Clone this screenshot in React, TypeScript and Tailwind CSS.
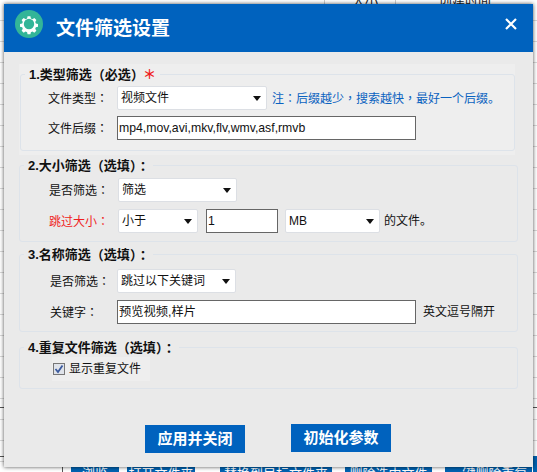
import React from "react";

function Caret() {
  return (
    <svg width="8" height="5" viewBox="0 0 8 5" className="shrink-0">
      <path d="M0 0H8L4 5Z" fill="#111" />
    </svg>
  );
}

function P({ children }: { children: React.ReactNode }) {
  return <span className="font-['Noto_Sans_CJK_TC',sans-serif]">{children}</span>;
}

function Select({ value, w }: { value: string; w: string }) {
  return (
    <div className={`flex h-[24px] ${w} shrink-0 items-center justify-between rounded-[2px] border border-[#dcdfe4] bg-white pl-[3px] pr-[5px] text-[12px] text-[#111]`}>
      <span>{value}</span>
      <Caret />
    </div>
  );
}

function Input({ value, w }: { value: string; w: string }) {
  return (
    <div className={`flex h-[24px] ${w} shrink-0 items-center border border-[#666] bg-white pl-[1px] text-[12.25px] leading-none text-[#111]`}>
      {value}
    </div>
  );
}

function Group({ title, extra, children, className }: { title: React.ReactNode; extra?: React.ReactNode; children: React.ReactNode; className: string }) {
  return (
    <fieldset className={`min-w-0 rounded-[3px] border border-[#dde3ea] ${className}`}>
      <legend className="ml-[4px] flex h-[16px] items-center px-[4px] text-[13px] font-bold leading-none text-[#111]">
        {title}
        {extra}
      </legend>
      {children}
    </fieldset>
  );
}

function Label({ children, red }: { children: React.ReactNode; red?: boolean }) {
  return <span className={`w-[69px] shrink-0 text-[12px] ${red ? "text-[#f01f1f]" : "text-[#111]"}`}>{children}</span>;
}

export default function App() {
  return (
    <div className="relative h-[472px] w-[537px] overflow-hidden bg-white bg-[repeating-linear-gradient(to_bottom,#ffffff_0,#ffffff_20px,#d8d8d8_20px,#d8d8d8_21px)] font-['Liberation_Sans','Noto_Sans_CJK_SC',sans-serif]">
      {/* application behind the dialog */}
      <div className="absolute left-[352px] top-[-9px] text-[13px] text-[#222]">大小</div>
      <div className="absolute left-[439px] top-[-9px] text-[13px] text-[#222]">创建时间</div>
      <div className="absolute left-[324px] top-0 h-[4px] w-px bg-[#ccc]" />
      <div className="absolute left-[395px] top-0 h-[4px] w-px bg-[#ccc]" />
      <div className="absolute left-0 top-[407px] h-px w-full bg-[#555]" />
      <div className="absolute left-0 top-[456px] h-px w-full bg-[#555]" />
      <div className="absolute left-[62px] top-[467px] h-[5px] w-px bg-[#555]" />
      <div className="absolute left-[533px] top-[456px] h-[16px] w-[4px] bg-[#0062b1]" />
      <div className="absolute left-[71px] top-[467px] flex text-[13px] text-white">
        <div className="mr-[8px] h-[20px] w-[48px] bg-[#0062b1] text-center leading-[14px]">浏览</div>
        <div className="mr-[25px] h-[20px] w-[68px] bg-[#0062b1] text-center leading-[14px]">打开文件夹</div>
        <div className="mr-[13px] h-[20px] w-[112px] bg-[#0062b1] text-center leading-[14px]">替换到目标文件夹</div>
        <div className="mr-[13px] h-[20px] w-[87px] bg-[#0062b1] text-center leading-[14px]">删除选中文件</div>
        <div className="h-[20px] w-[87px] bg-[#0062b1] text-center leading-[14px]">一键删除重复</div>
      </div>

      {/* dialog */}
      <div className="absolute left-[4px] top-[4px] h-[463px] w-[529px] bg-[#eaeaea] shadow-[0_0_4px_rgba(0,0,0,0.7)]">
        <div className="flex h-[48px] items-center bg-[#0062be] pl-[11px] pr-[16px]">
          <svg width="28" height="28" viewBox="0 0 28 28" className="mb-[8px] shrink-0">
            <circle cx="14" cy="14" r="14" fill="#33b598" />
            <path
              d="M12.4 5.5h3.2l.5 2.4 1.7.7 2.1-1.3 2.3 2.3-1.3 2.1.7 1.7 2.4.5v3.2l-2.4.5-.7 1.7 1.3 2.1-2.3 2.3-2.1-1.3-1.7.7-.5 2.4h-3.2l-.5-2.4-1.7-.7-2.1 1.3-2.3-2.3 1.3-2.1-.7-1.7-2.4-.5v-3.2l2.4-.5.7-1.7-1.3-2.1 2.3-2.3 2.1 1.3 1.7-.7z"
              fill="#fff"
              transform="translate(1.4 1.4) scale(0.9)"
            />
            <circle cx="14" cy="14" r="5.2" fill="#33b598" />
          </svg>
          <span className="ml-[13px] text-[19px] font-bold leading-none text-white">文件筛选设置</span>
          <svg width="12" height="12" viewBox="0 0 12 12" className="mb-[8px] ml-auto shrink-0">
            <path d="M1 1L11 11M11 1L1 11" stroke="#fff" strokeWidth="2.2" />
          </svg>
        </div>

        <div className="pl-[15px] pt-[12px]">
          <div className="h-[91px] w-[496px] bg-[#eeeeee] pt-[2px]">
            <Group
              title={<>1.类型筛选<P>（</P>必选<P>）</P></>}
              extra={<span className="ml-[-1px] text-[13px] font-bold leading-none text-[#f01f1f]">＊</span>}
              className="ml-[1px] h-[85px] w-[495px]"
            >
              <div className="flex flex-col gap-[6px] pl-[27px] pt-[4px]">
                <div className="flex items-center">
                  <Label>文件类型<P>：</P></Label>
                  <Select value="视频文件" w="w-[150px]" />
                  <span className="ml-[5px] whitespace-nowrap text-[12px] text-[#0a62c0]">注<P>：</P>后缀越少<P>，</P>搜索越快<P>，</P>最好一个后缀。</span>
                </div>
                <div className="flex items-center">
                  <Label>文件后缀<P>：</P></Label>
                  <Input value="mp4,mov,avi,mkv,flv,wmv,asf,rmvb" w="w-[299px]" />
                </div>
              </div>
            </Group>
          </div>

          <Group title={<>2.大小筛选<P>（</P>选填<P>）：</P></>} className="mt-[2px] h-[85px] w-[499px]">
            <div className="flex flex-col gap-[7px] px-[29px] pt-[5px]">
              <div className="flex items-center">
                <Label>是否筛选<P>：</P></Label>
                <Select value="筛选" w="w-[119px]" />
              </div>
              <div className="flex items-center">
                <Label red>跳过大小<P>：</P></Label>
                <Select value="小于" w="w-[80px]" />
                <div className="ml-[8px]"><Input value="1" w="w-[72px]" /></div>
                <div className="ml-[7px]"><Select value="MB" w="w-[95px]" /></div>
                <span className="ml-[4px] whitespace-nowrap text-[12px] text-[#111]">的文件。</span>
              </div>
            </div>
          </Group>

          <Group title={<>3.名称筛选<P>（</P>选填<P>）：</P></>} className="mt-[4px] h-[86px] w-[499px]">
            <div className="flex flex-col gap-[7px] px-[28px] pt-[7px]">
              <div className="flex items-center">
                <Label><span className="ml-[2px]">是否筛选</span><P>：</P></Label>
                <Select value="跳过以下关键词" w="w-[119px]" />
              </div>
              <div className="flex items-center">
                <Label><span className="ml-[2px]">关键字</span><P>：</P></Label>
                <Input value="预览视频,样片" w="w-[299px]" />
                <span className="ml-[7px] whitespace-nowrap text-[12px] text-[#111]">英文逗号隔开</span>
              </div>
            </div>
          </Group>

          <Group title={<>4.重复文件筛选<P>（</P>选填<P>）：</P></>} className="mt-[7px] h-[50px] w-[499px]">
            <div className="ml-[32px] mt-[2px] flex h-[24px] w-[98px] items-center bg-[#eeeeee] pl-[1px]">
              <div className="flex h-[12px] w-[12px] items-center justify-center border border-[#777] bg-[#dfe3ea]">
                <svg width="10" height="10" viewBox="0 0 10 10">
                  <path d="M1.5 5L4 8L8.5 1.5" fill="none" stroke="#3b5a9e" strokeWidth="1.8" />
                </svg>
              </div>
              <span className="ml-[4px] text-[12px] text-[#111]">显示重复文件</span>
            </div>
          </Group>

          <div className="mt-[35px] flex items-start pl-[126px]">
            <button className="mt-[1px] h-[28px] w-[100px] bg-[#0062be] text-[15px] font-bold text-white">应用并关闭</button>
            <button className="ml-[46px] h-[28px] w-[100px] bg-[#0062be] text-[15px] font-bold text-white">初始化参数</button>
          </div>
        </div>
      </div>
    </div>
  );
}
